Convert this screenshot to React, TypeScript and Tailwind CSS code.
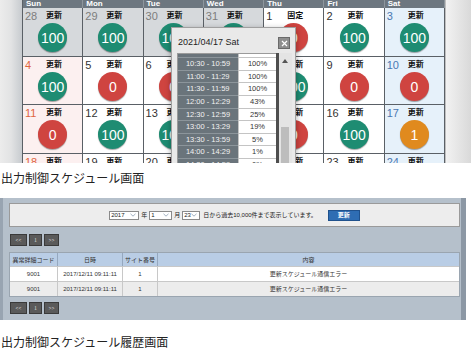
import React from "react";

type C = "g" | "r" | "o";
type Cell = { d: string; label?: string; v?: string; c?: C; kind: "prev" | "sun" | "sat" | "wk" };

const heads = ["Sun", "Mon", "Tue", "Wed", "Thu", "Fri", "Sat"];

const rows: Cell[][] = [
  [
    { d: "28", label: "更新", v: "100", c: "g", kind: "prev" },
    { d: "29", label: "更新", v: "100", c: "g", kind: "prev" },
    { d: "30", label: "更新", v: "100", c: "g", kind: "prev" },
    { d: "31", label: "更新", v: "100", c: "g", kind: "prev" },
    { d: "1", label: "固定", v: "0", c: "r", kind: "wk" },
    { d: "2", label: "更新", v: "100", c: "g", kind: "wk" },
    { d: "3", label: "更新", v: "100", c: "g", kind: "sat" },
  ],
  [
    { d: "4", label: "更新", v: "100", c: "g", kind: "sun" },
    { d: "5", label: "更新", v: "0", c: "r", kind: "wk" },
    { d: "6", label: "更新", v: "0", c: "r", kind: "wk" },
    { d: "7", label: "更新", v: "0", c: "r", kind: "wk" },
    { d: "8", label: "更新", v: "100", c: "g", kind: "wk" },
    { d: "9", label: "更新", v: "0", c: "r", kind: "wk" },
    { d: "10", label: "更新", v: "0", c: "r", kind: "sat" },
  ],
  [
    { d: "11", label: "更新", v: "0", c: "r", kind: "sun" },
    { d: "12", label: "更新", v: "100", c: "g", kind: "wk" },
    { d: "13", label: "更新", v: "100", c: "g", kind: "wk" },
    { d: "14", label: "更新", v: "0", c: "r", kind: "wk" },
    { d: "15", label: "更新", v: "0", c: "r", kind: "wk" },
    { d: "16", label: "更新", v: "100", c: "g", kind: "wk" },
    { d: "17", label: "更新", v: "1", c: "o", kind: "sat" },
  ],
  [
    { d: "18", label: "更新", kind: "sun" },
    { d: "19", label: "更新", kind: "wk" },
    { d: "20", label: "更新", kind: "wk" },
    { d: "21", label: "更新", kind: "wk" },
    { d: "22", label: "更新", kind: "wk" },
    { d: "23", label: "更新", kind: "wk" },
    { d: "24", label: "更新", kind: "sat" },
  ],
];

const bgOf = (k: Cell["kind"]) =>
  k === "prev" ? "bg-[#d6d9dc]" : k === "sun" ? "bg-[#fcf0f0]" : k === "sat" ? "bg-[#e6f1fa]" : "bg-white";
const dcOf = (k: Cell["kind"]) =>
  k === "prev" ? "text-[#7d7d7d]" : k === "sun" ? "text-[#e0653f]" : k === "sat" ? "text-[#4a78b2]" : "text-[#333333]";
const circOf = (c: C) => (c === "g" ? "bg-[#1e8c72]" : c === "r" ? "bg-[#cf4440]" : "bg-[#e08a1e]");

const times: [string, string][] = [
  ["10:00 - 10:29", "100%"],
  ["10:30 - 10:59", "100%"],
  ["11:00 - 11:29", "100%"],
  ["11:30 - 11:59", "100%"],
  ["12:00 - 12:29", "43%"],
  ["12:30 - 12:59", "25%"],
  ["13:00 - 13:29", "19%"],
  ["13:30 - 13:59", "5%"],
  ["14:00 - 14:29", "1%"],
  ["14:30 - 14:59", "0%"],
];

const jp = { fontFamily: '"Liberation Sans", "Noto Sans CJK JP", sans-serif' };

function CalCell({ c, h }: { c: Cell; h: string }) {
  return (
    <div className={`${bgOf(c.kind)} ${h} border-r border-b border-[#5a6066] flex flex-col`}>
      <div className="h-[14px] mt-[1px] flex items-center relative">
        <span className={`absolute left-[2px] text-[11px] leading-none ${dcOf(c.kind)}`}>{c.d}</span>
        {c.label && (
          <span className="absolute left-[23px] text-[8px] font-bold leading-none text-[#111]">{c.label}</span>
        )}
      </div>
      {c.v && c.c && (
        <div
          className={`${circOf(c.c)} mx-auto w-[29px] h-[29px] rounded-full flex items-center justify-center text-white text-[14px] leading-none shadow-[0_1px_1px_rgba(0,0,0,0.35)]`}
        >
          {c.v}
        </div>
      )}
    </div>
  );
}

function Select({ v, w }: { v: string; w: string }) {
  return (
    <div className={`${w} h-[9px] bg-white border border-[#8a8a8a] flex items-center justify-between px-[1px]`}>
      <span className="text-[6px] leading-none text-[#222]">{v}</span>
      <svg width="6" height="4" viewBox="0 0 6 4" className="mr-[1px]">
        <path d="M0.5 0.8 L3 3.2 L5.5 0.8" fill="none" stroke="#7a8fa8" strokeWidth="0.7" />
      </svg>
    </div>
  );
}

function Pager() {
  const b = "h-[12px] bg-[#5a5a5a] border border-[#3a3a3a] flex items-center justify-center text-[5px] leading-none text-[#d8d8d8]";
  return (
    <div className="flex gap-[2px] ml-[1px]">
      <div className={`${b} w-[17px]`}>&lt;&lt;</div>
      <div className={`${b} w-[13px]`} style={{ fontFamily: '"Liberation Serif", serif', fontSize: "6px" }}>1</div>
      <div className={`${b} w-[15px]`}>&gt;&gt;</div>
    </div>
  );
}

export default function App() {
  return (
    <div className="w-[471px] h-[354px] bg-white overflow-hidden" style={jp}>
      {/* Top screenshot */}
      <div className="relative h-[163px] flex overflow-hidden">
        <div className="w-[22px] h-full bg-linear-to-r from-[#ececec] via-[#e2e3e4] to-[#c7cbcf]" />
        <div className="w-[423px] flex flex-col border-l border-[#5a6066]">
          <div className="grid grid-cols-7 h-[12px] bg-[#6d7780]">
            {heads.map((h) => (
              <div key={h} className="border-r border-[#8d969d] flex items-center pl-[3px] text-[8px] font-bold text-white leading-none">
                {h}
              </div>
            ))}
          </div>
          {rows.map((r, i) => (
            <div key={i} className="grid grid-cols-7">
              {r.map((c, j) => (
                <CalCell key={j} c={c} h={i === 1 ? "h-[48px]" : "h-[49px]"} />
              ))}
            </div>
          ))}
        </div>
        <div className="flex-1 h-full bg-linear-to-r from-[#f2f2f2] to-[#d9d9d9] border-l border-[#bfbfbf]" />

        {/* Popup */}
        <div className="absolute left-[171px] top-[27px] w-[125px] h-[150px] bg-[#e9e9e9] border border-[#a0a0a0] shadow-[0_2px_6px_rgba(0,0,0,0.35)]">
          <div className="absolute left-[6px] top-[9px] text-[9px] leading-[10px] text-[#222]">2021/04/17 Sat</div>
          <div className="absolute left-[106px] top-[9px] w-[12px] h-[12px] bg-[#8e8e8e] border border-[#6a6a6a] flex items-center justify-center">
            <svg width="7" height="7" viewBox="0 0 7 7">
              <path d="M1 1 L6 6 M6 1 L1 6" stroke="white" strokeWidth="1.2" />
            </svg>
          </div>
          <div className="absolute left-[5px] top-[25px] w-[99px] h-[130px] overflow-hidden border-l border-t border-[#9a9a9a]">
            <div className="-mt-[8.4px] flex flex-col">
              {times.map(([t, p]) => (
                <div key={t} className="flex h-[12.6px]">
                  <div className="w-[60px] bg-[#6a747b] border-b border-[#8c959b] flex items-center justify-center text-[7.5px] leading-none text-[#f2f2f2]">
                    {t}
                  </div>
                  <div className="flex-1 bg-white border-b border-l border-[#c4c4c4] flex items-center justify-center text-[7.5px] leading-none text-[#333]">
                    {p}
                  </div>
                </div>
              ))}
            </div>
          </div>
          <div className="absolute left-[104px] top-[25px] w-[16px] h-[130px] flex">
            <div className="w-[3px] h-full bg-[#4e4e4e]" />
            <div className="flex-1 h-full bg-[#e4e4e4] relative">
              <svg width="6" height="4" viewBox="0 0 6 4" className="absolute left-[3px] top-[6px]">
                <path d="M0 4 L3 0 L6 4 Z" fill="#555" />
              </svg>
              <div className="absolute left-[2px] top-[74px] w-[8px] h-[60px] bg-[#bdbdbd]" />
            </div>
          </div>
        </div>
      </div>

      {/* Caption 1 */}
      <div className="h-[35px] pt-[9px] pl-[1px] text-[12px] leading-[14px] text-[#222]">出力制御スケジュール画面</div>

      {/* Bottom screenshot */}
      <div className="w-[466px] h-[122px] bg-[#b5c0cb] border-l-[3px] border-r-[5px] border-l-[#98a4b1] border-r-[#8c98a5] pt-[5px] pl-[6px] flex flex-col">
        <div className="w-[451px] h-[24px] bg-[#ededed] border border-[#9a9a9a] flex items-center justify-center gap-[1px] text-[6px] leading-none text-[#222]">
          <Select v="2017" w="w-[30px]" />
          <span className="mx-[1px]">年</span>
          <Select v="1" w="w-[23px]" />
          <span className="mx-[1px]">月</span>
          <Select v="23" w="w-[18px]" />
          <span className="ml-[2px]">日から過去10,000件まで表示しています。</span>
          <div className="ml-[10px] w-[32px] h-[11px] bg-[#2e6db3] border border-[#1f518c] flex items-center justify-center text-white text-[6px] font-bold">
            更新
          </div>
        </div>
        <div className="mt-[7px]">
          <Pager />
        </div>
        <div className="mt-[6px] w-[451px] border border-[#9aa5b0] text-[6px] leading-none text-[#333] bg-white">
          <div className="grid grid-cols-[48px_65px_35px_1fr] h-[13px] bg-[#b9cde5]">
            <div className="border-r border-[#95a8bf] flex items-center justify-center">異常詳細コード</div>
            <div className="border-r border-[#95a8bf] flex items-center justify-center">日時</div>
            <div className="border-r border-[#95a8bf] flex items-center justify-center">サイト番号</div>
            <div className="flex items-center justify-center">内容</div>
          </div>
          {["bg-white", "bg-[#ececec]"].map((bg, i) => (
            <div key={i} className={`grid grid-cols-[48px_65px_35px_1fr] h-[15px] ${bg} border-t border-[#c8c8c8]`}>
              <div className="border-r border-[#c8c8c8] flex items-center justify-center">9001</div>
              <div className="border-r border-[#c8c8c8] flex items-center justify-center">2017/12/11 09:11:11</div>
              <div className="border-r border-[#c8c8c8] flex items-center justify-center">1</div>
              <div className="flex items-center justify-center">更新スケジュール通信エラー</div>
            </div>
          ))}
        </div>
        <div className="mt-[5px]">
          <Pager />
        </div>
      </div>

      {/* Caption 2 */}
      <div className="pt-[16px] pl-[1px] text-[12px] leading-[14px] text-[#222]">出力制御スケジュール履歴画面</div>
    </div>
  );
}
